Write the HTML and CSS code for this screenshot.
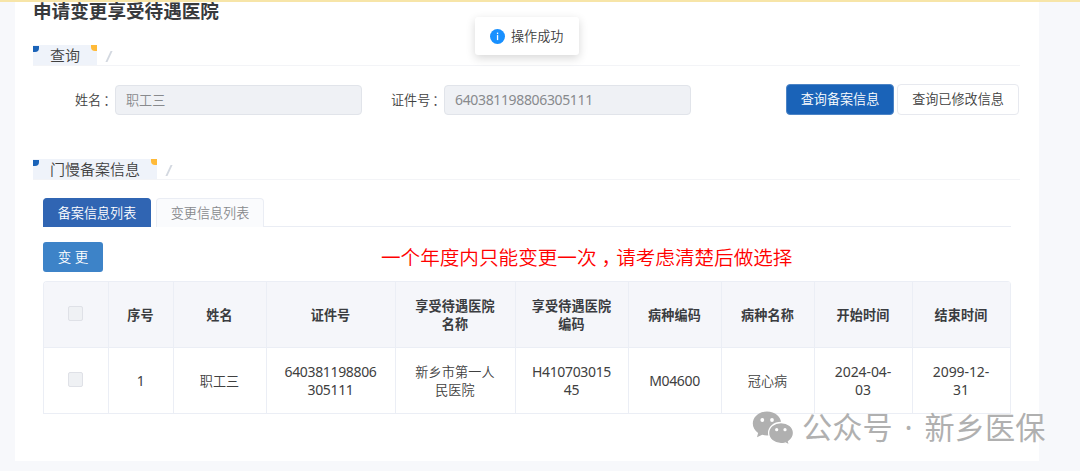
FILE: index.html
```html
<!DOCTYPE html>
<html lang="zh-CN">
<head>
<meta charset="utf-8">
<title>申请变更享受待遇医院</title>
<link rel="stylesheet" href="styles.css">
</head>
<body>
<main class="card">
  <h1 class="title">申请变更享受待遇医院</h1>
  <div class="section"><h2 class="tag">查询</h2><span class="slash"></span></div>
  <form class="query">
    <label class="label">姓名<span class="colon">：</span></label>
    <div class="input name">职工三</div>
    <label class="label second">证件号<span class="colon">：</span></label>
    <div class="input num">640381198806305111</div>
    <button type="button" class="btn primary">查询备案信息</button>
    <button type="button" class="btn plain">查询已修改信息</button>
  </form>
  <div class="section"><h2 class="tag">门慢备案信息</h2><span class="slash"></span></div>
  <div class="content">
    <nav class="tabs">
      <a class="tab active">备案信息列表</a>
      <a class="tab">变更信息列表</a>
      <span class="rule"></span>
    </nav>
    <div class="actions">
      <button type="button" class="btn change">变 更</button>
      <p class="notice">一个年度内只能变更一次<span class="comma">，</span>请考虑清楚后做选择</p>
    </div>
    <div class="table">
      <div class="cell head"><i class="check"></i></div>
      <div class="cell head">序号</div>
      <div class="cell head">姓名</div>
      <div class="cell head">证件号</div>
      <div class="cell head">享受待遇医院<br>名称</div>
      <div class="cell head">享受待遇医院<br>编码</div>
      <div class="cell head">病种编码</div>
      <div class="cell head">病种名称</div>
      <div class="cell head">开始时间</div>
      <div class="cell head">结束时间</div>
      <div class="cell"><i class="check"></i></div>
      <div class="cell num">1</div>
      <div class="cell">职工三</div>
      <div class="cell num">640381198806<br>305111</div>
      <div class="cell">新乡市第一人<br>民医院</div>
      <div class="cell num">H410703015<br>45</div>
      <div class="cell num">M04600</div>
      <div class="cell">冠心病</div>
      <div class="cell num date">2024-04-<br>03</div>
      <div class="cell num date">2099-12-<br>31</div>
    </div>
  </div>
</main>
<div class="toast">
  <svg width="15" height="15" viewBox="0 0 15 15"><circle cx="7.5" cy="7.5" r="7.5" fill="#1890ff"/><rect x="6.9" y="3.6" width="1.3" height="1.5" fill="#fff"/><rect x="6.9" y="6.1" width="1.3" height="5" fill="#fff"/></svg>
  <span>操作成功</span>
</div>
<div class="watermark">
  <svg width="42" height="35" viewBox="0 0 42 35">
    <g fill="#b0b0b0">
      <path d="M15 .5C7 .5.8 5.800.8 12.600c0 3.900 2 7.100 5.300 9.400L5 26.300l5.200-2.500c1.600.4 3.100.6 4.800.6 8 0 14.200-5.200 14.200-11.900S23 .5 15 .5z"/>
      <path stroke="#fff" stroke-width="1.300" d="M29 11.500c-6.900 0-12.400 4.600-12.400 10.600S22 32.600 29 32.600c1.500 0 2.900-.2 4.200-.6l4.300 2.200-1-3.600c3-2 5-5 5-8.500 0-6-5.500-10.600-12.500-10.600z"/>
    </g>
    <g fill="#fff"><circle cx="10.300" cy="9" r="1.900"/><circle cx="20" cy="9" r="1.900"/><circle cx="24.700" cy="18.700" r="1.600"/><circle cx="33" cy="18.700" r="1.600"/></g>
  </svg>
  <span class="account">公众号</span><span class="dot">·</span><span class="account">新乡医保</span>
</div>
</body>
</html>
```
FILE: styles.css
```css
* { box-sizing: border-box; }
body {
  margin: 0;
  height: 471px;
  background: #f7f8fb;
  border-top: 2px solid #f7e5a8;
  color: #404040;
  font: 350 13.1px/18px "Noto Sans", "Noto Sans CJK SC", sans-serif;
}
.card {
  width: 1024px;
  height: 459px;
  margin-left: 15px;
  padding: 0 19px 0 18px;
  background: #fff;
}
.title {
  height: 42px;
  margin: 0;
  font-size: 18.6px;
  line-height: 18px;
  font-weight: 700;
  color: #383a3d;
}
.section {
  display: flex;
  height: 22px;
  padding-top: 1px;
  border-bottom: 1px solid #f3f4f7;
}
.tag {
  position: relative;
  margin: 0;
  padding: 0 17px;
  font-size: 15px;
  line-height: 20px;
  font-weight: 350;
  background: #eff3fa;
}
.tag::before, .tag::after {
  content: "";
  position: absolute;
  top: 1px;
  width: 6px;
  height: 6px;
}
.tag::before { left: 0; background: #1a63b8; border-radius: 0 0 4px 0; }
.tag::after { right: 0; top: 0; background: #ffba38; border-radius: 0 0 0 4px; }
.slash {
  width: 1.5px;
  height: 11px;
  margin: 6px 0 0 11px;
  background: #d3d8e0;
  transform: skewX(-25deg);
}
.query {
  display: flex;
  align-items: center;
  height: 31px;
  margin: 18px 0 43px;
  padding: 0 1px 0 42px;
}
.label { width: 40px; white-space: nowrap; }
.label.second { width: 53px; margin-left: 29px; }
.colon { margin-left: 2px; }
.input {
  width: 247px;
  height: 30px;
  padding: 0 10px;
  border: 1px solid #e1e4ea;
  border-radius: 4px;
  background: #eff1f5;
  color: #888a8d;
  line-height: 28px;
}
.btn {
  padding: 0 0 1px;
  border: 1px solid transparent;
  border-radius: 4px;
  font: inherit;
  white-space: nowrap;
}
.primary { width: 108px; height: 31px; margin: 0 3px 0 auto; background: #1a63b8; border-color: #4c84c6; color: #fff; }
.plain { width: 122px; height: 31px; background: #fff; border-color: #e7e9ef; color: #404040; }
.content { padding: 18px 9px 0 10px; }
.tabs { display: flex; height: 29px; }
.tab {
  width: 108px;
  height: 29px;
  margin-right: 5px;
  border: 1px solid #eaedf4;
  border-bottom: 0;
  border-radius: 4px 4px 0 0;
  background: #fafbfd;
  color: #888a8d;
  text-align: center;
  line-height: 28px;
}
.active { background: #3065b3; border-color: #3065b3; color: #fff; }
.rule { flex: 1; margin-left: -5px; border-bottom: 1px solid #eaedf4; }
.actions { display: flex; height: 39px; margin-top: 15px; }
.change { width: 60px; height: 30px; background: #3d83c8; color: #fff; font-size: 13.5px; border-radius: 3px; }
.notice { margin: 0 0 0 278px; color: #f00; font-size: 19.6px; line-height: 31px; white-space: nowrap; }
.comma { display: inline-block; width: 1em; padding-left: 5px; font-feature-settings: "halt"; }
.table {
  display: grid;
  grid-template-columns: 65px 65px 93px 129px 120px 113px 93px 93px 98px 98px;
  grid-auto-rows: 66px;
  width: 968px;
  border: solid #ebeef5;
  border-width: 1px 0 0 1px;
  border-radius: 4px 4px 0 0;
  overflow: hidden;
}
.cell {
  display: flex;
  align-items: center;
  justify-content: center;
  padding-right: 1px;
  border: solid #ebeef5;
  border-width: 0 1px 1px 0;
  text-align: center;
  letter-spacing: .12px;
}
.head { background: #f5f6fa; color: #3a3c40; font-weight: 700; }
.num { font-size: 14px; font-weight: 400; letter-spacing: -.35px; }
.date { letter-spacing: -.1px; }
.check {
  width: 15px;
  height: 15px;
  margin-top: -2px;
  border: 1px solid #dfe1e7;
  border-radius: 2px;
  background: #eff1f4;
}
.toast {
  position: absolute;
  left: 475px;
  top: 17px;
  width: 104px;
  height: 38px;
  display: flex;
  align-items: center;
  gap: 6px;
  padding-left: 15px;
  border-radius: 3px;
  background: #fff;
  box-shadow: 0 3px 10px rgba(0, 0, 0, .16);
}
.watermark {
  position: absolute;
  left: 752px;
  top: 411px;
  display: flex;
  color: #b0b0b0;
  font-size: 30.2px;
  font-weight: 400;
  line-height: 34px;
  white-space: nowrap;
}
.account:first-of-type { margin-left: 8px; }
.dot { width: 32px; text-align: center; }
```
